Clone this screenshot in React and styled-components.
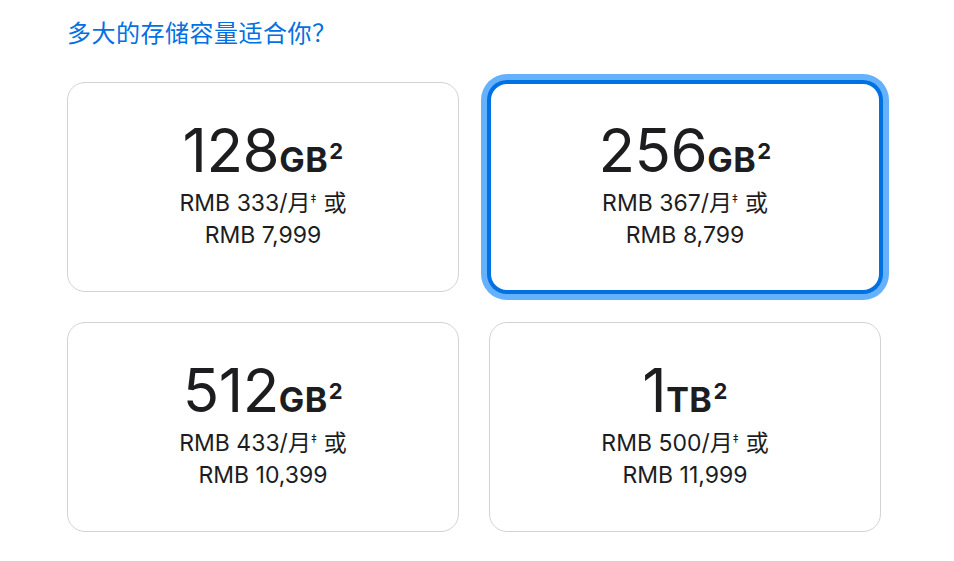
import * as React from "react";
import styled, { createGlobalStyle } from "styled-components";

const GlobalStyle = createGlobalStyle`
  body {
    margin: 0;
    background: #fff;
    font-family: Inter, "Noto Sans CJK SC", sans-serif;
    color: #1d1d1f;
  }
`;

const Page = styled.div`
  padding: 16px 0 0 67px;
`;

const Title = styled.h2`
  margin: 0 0 34px;
  font-family: "Noto Sans CJK SC", sans-serif;
  font-size: 24px;
  font-weight: 400;
  line-height: 32px;
  letter-spacing: 0.5px;
  color: #0071e3;
`;

const Grid = styled.div`
  display: grid;
  grid-template-columns: 392px 392px;
  grid-auto-rows: 210px;
  gap: 30px;
`;

const Card = styled.div`
  box-sizing: border-box;
  display: flex;
  flex-direction: column;
  align-items: center;
  justify-content: center;
  border-radius: 18px;
  background: #fff;
  border: ${(p) => (p.$selected ? "2px solid #0071e3" : "1px solid #d2d2d7")};
  box-shadow: ${(p) =>
    p.$selected ? "0 0 0 2px #0071e3, 0 0 0 8px #66b1fb" : "none"};
`;

const Capacity = styled.div`
  height: 52px;
  font-size: 60px;
  font-weight: 400;
  line-height: 52px;
  letter-spacing: -0.5px;
  margin-bottom: 11px;
  white-space: nowrap;
`;

const Unit = styled.span`
  font-size: 34px;
  font-weight: 700;
  line-height: 20px;
  letter-spacing: 0.5px;
`;

const Sup = styled.span`
  font-size: 22px;
  font-weight: 700;
  position: relative;
  top: -13px;
  margin-left: 1px;
`;

const PriceLine = styled.div`
  height: 32px;
  font-size: 23px;
  line-height: 32px;
  text-align: center;
  white-space: nowrap;
`;

const Dagger = styled.span`
  font-size: 12px;
  position: relative;
  top: -8px;
  margin-right: 7px;
`;

const options = [
  { size: "128", unit: "GB", monthly: "333", total: "7,999" },
  { size: "256", unit: "GB", monthly: "367", total: "8,799", selected: true },
  { size: "512", unit: "GB", monthly: "433", total: "10,399" },
  { size: "1", unit: "TB", monthly: "500", total: "11,999" },
];

const App = () => (
  <Page>
    <GlobalStyle />
    <Title>多大的存储容量适合你？</Title>
    <Grid>
      {options.map((o) => (
        <Card key={o.size} $selected={o.selected}>
          <Capacity>
            {o.size}
            <Unit>
              {o.unit}
              <Sup>2</Sup>
            </Unit>
          </Capacity>
          <PriceLine>
            RMB {o.monthly}/月<Dagger>‡</Dagger>或
          </PriceLine>
          <PriceLine>RMB {o.total}</PriceLine>
        </Card>
      ))}
    </Grid>
  </Page>
);

export default App;
